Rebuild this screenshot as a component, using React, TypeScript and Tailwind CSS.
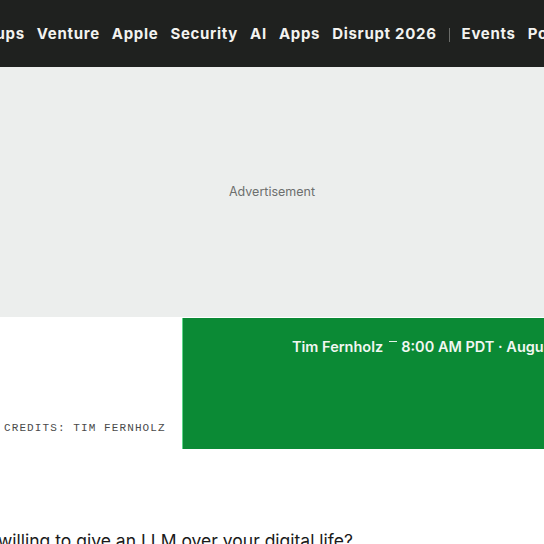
const navItems = ["Startups", "Venture", "Apple", "Security", "AI", "Apps", "Disrupt 2026"];

export default function App() {
  return (
    <main className="w-[544px] h-[544px] overflow-hidden bg-white font-['Inter',sans-serif]">
      <nav className="h-[67px] bg-[#1f211f] flex items-center pt-[2px] overflow-hidden whitespace-nowrap">
        <div className="flex items-center gap-[12px] -ml-[44px] text-[15px] font-bold tracking-[0.7px] text-[#f3f3f0]">
          {navItems.map((item) => (
            <a key={item} href="#">{item}</a>
          ))}
          <span className="w-px h-[14px] bg-[#6a6c69]" />
          <a href="#">Events</a>
          <a href="#">Podcasts</a>
        </div>
      </nav>

      <div className="h-[250px] bg-[#eceeed] flex items-center justify-center pt-[1px]">
        <span className="text-[12.5px] text-[#6d6f6e]">Advertisement</span>
      </div>

      <section className="flex mt-px">
        <div className="w-[182px] flex items-end pb-[13px]">
          <p className="pl-[4px] font-['Liberation_Mono',monospace] text-[11px] tracking-[1.1px] text-[#4a4a4a]">
            CREDITS: TIM FERNHOLZ
          </p>
        </div>
        <div className="flex-1 h-[131px] bg-[#0b8a35] border-l border-[#5fd88a] pl-[109px] pt-[18px] overflow-hidden whitespace-nowrap">
          <div className="flex items-center text-[14.5px] font-semibold text-[#f2f7f2]">
            <span>Tim Fernholz</span>
            <span className="ml-[6px] mr-[4px] -mt-[10px] w-[8px] h-px shrink-0 bg-[#e4f2e7]" />
            <span>8:00 AM PDT · August 26, 2025</span>
          </div>
        </div>
      </section>

      <p className="mt-[79px] -ml-[2px] whitespace-nowrap text-[17.5px] text-[#1a1a1a]">
        willing to give an LLM over your digital life?
      </p>
    </main>
  );
}
